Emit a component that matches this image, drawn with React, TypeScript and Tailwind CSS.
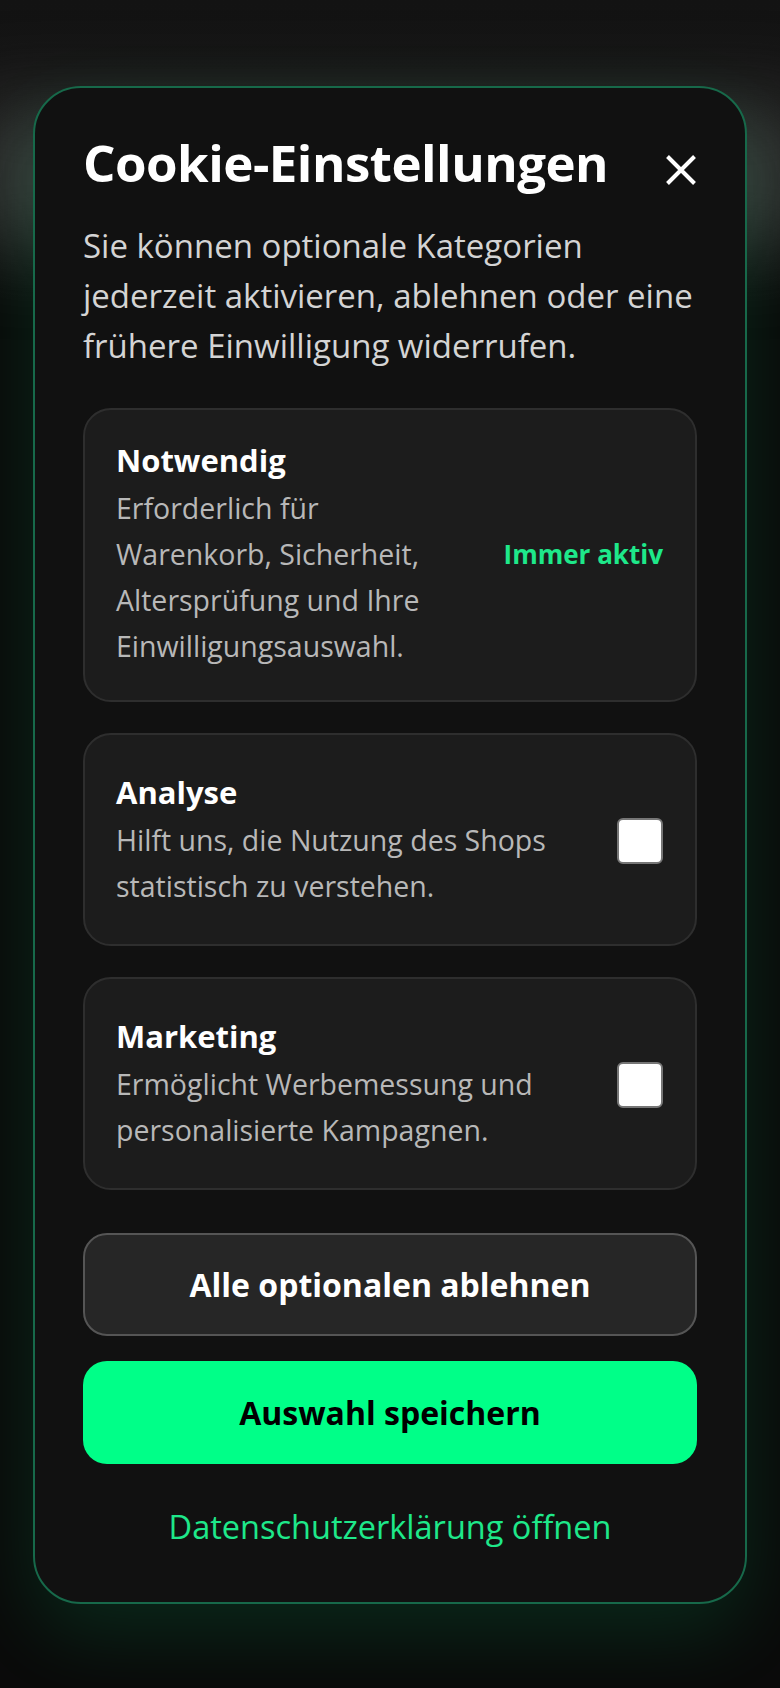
import { useState } from 'react';

type Category = {
  id: string;
  title: string;
  description: string;
};

const optionalCategories: Category[] = [
  {
    id: 'analyse',
    title: 'Analyse',
    description: 'Hilft uns, die Nutzung des Shops statistisch zu verstehen.',
  },
  {
    id: 'marketing',
    title: 'Marketing',
    description: 'Ermöglicht Werbemessung und personalisierte Kampagnen.',
  },
];

const CloseIcon = () => (
  <svg width="32" height="32" viewBox="0 0 32 32" fill="none" aria-hidden="true">
    <path d="M2.5 2.5L29.5 29.5M29.5 2.5L2.5 29.5" stroke="white" strokeWidth="4" />
  </svg>
);

const OptionalCard = ({
  category,
  checked,
  onToggle,
}: {
  category: Category;
  checked: boolean;
  onToggle: () => void;
}) => (
  <div className="flex items-center gap-[32px] rounded-[28px] border-2 border-[#2e2e2e] bg-[#1c1c1c] pb-[35px] pl-[31px] pr-[32px] pt-[37px]">
    <div className="flex-1">
      <h3 className="text-[31px] font-bold leading-[40px] text-white">{category.title}</h3>
      <p className="mt-[5px] text-[28.5px] leading-[46px] text-[#b8b8b8]">{category.description}</p>
    </div>
    <button
      type="button"
      onClick={onToggle}
      aria-pressed={checked}
      className="h-[46px] w-[46px] shrink-0 rounded-[6px] border-2 border-[#767676] bg-white"
    />
  </div>
);

export default function App() {
  const [selected, setSelected] = useState<Record<string, boolean>>({
    analyse: false,
    marketing: false,
  });

  return (
    <div className="relative min-h-[1688px] overflow-hidden bg-[#0a0a0a] font-['Open_Sans',sans-serif]">
      {/* blurred page behind the dialog */}
      <div className="absolute inset-x-0 top-0 h-[300px] bg-gradient-to-b from-[#131313] via-[#151515] to-[#0a0a0a]" />
      <div className="absolute inset-x-[-30px] top-[105px] h-[140px] bg-[#353535] blur-2xl" />

      <div className="relative px-[33px] pt-[86px]">
        <div className="rounded-[48px] border-2 border-[#17694a] bg-[#111111] px-[48px] pb-[54px] pt-[43px] shadow-[0_30px_80px_rgba(0,255,136,0.12)]">
          <div className="flex items-start justify-between">
            <h2 className="text-[51px] font-bold leading-[62px] tracking-[-0.01em] text-white">
              Cookie-Einstellungen
            </h2>
            <button type="button" className="mt-[23px] p-0" aria-label="Schließen">
              <CloseIcon />
            </button>
          </div>

          <p className="mt-[28px] text-[33px] leading-[50px] text-[#d4d4d4]">
            Sie können optionale Kategorien jederzeit aktivieren, ablehnen oder eine frühere Einwilligung widerrufen.
          </p>

          <div className="mt-[37px] flex flex-col gap-[31px]">
            <div className="flex items-center gap-[32px] rounded-[28px] border-2 border-[#2e2e2e] bg-[#1c1c1c] pb-[31px] pl-[31px] pr-[32px] pt-[30px]">
              <div className="flex-1">
                <h3 className="text-[31px] font-bold leading-[40px] text-white">Notwendig</h3>
                <p className="mt-[5px] text-[28.5px] leading-[46px] text-[#b8b8b8]">
                  Erforderlich für
                  <br />
                  Warenkorb, Sicherheit,
                  <br />
                  Altersprüfung und Ihre
                  <br />
                  Einwilligungsauswahl.
                </p>
              </div>
              <span className="shrink-0 text-[26px] font-bold text-[#1ee88a]">Immer aktiv</span>
            </div>

            {optionalCategories.map((category) => (
              <OptionalCard
                key={category.id}
                category={category}
                checked={selected[category.id]}
                onToggle={() =>
                  setSelected((prev) => ({ ...prev, [category.id]: !prev[category.id] }))
                }
              />
            ))}
          </div>

          <button
            type="button"
            className="mt-[43px] flex h-[103px] w-full items-center justify-center rounded-[24px] border-2 border-[#555555] bg-[#262626] text-[32px] font-bold text-white"
          >
            Alle optionalen ablehnen
          </button>
          <button
            type="button"
            className="mt-[25px] flex h-[103px] w-full items-center justify-center rounded-[24px] bg-[#00ff88] text-[32px] font-bold text-black"
          >
            Auswahl speichern
          </button>

          <div className="mt-[42px] text-center">
            <a href="#" className="text-[32.5px] leading-[42px] text-[#1ee88a]">
              Datenschutzerklärung öffnen
            </a>
          </div>
        </div>
      </div>
    </div>
  );
}
